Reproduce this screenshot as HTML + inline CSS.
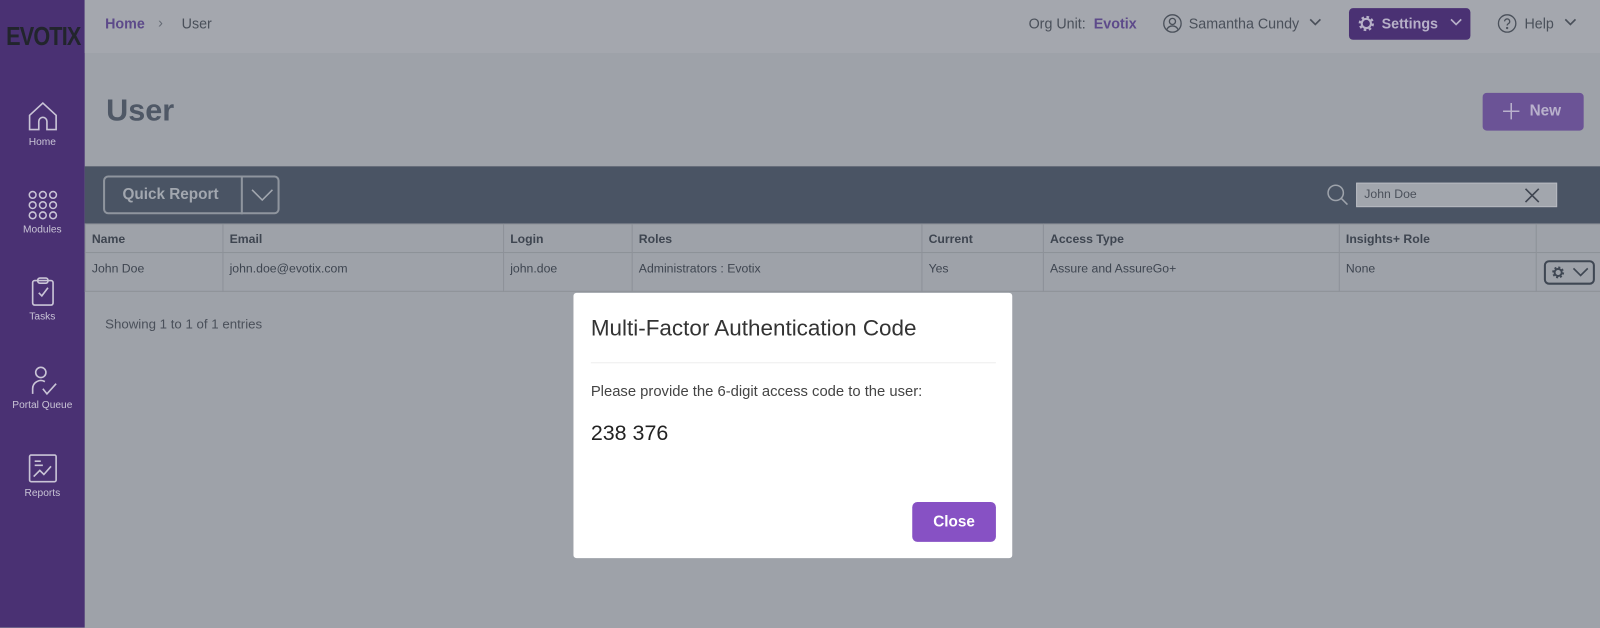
<!DOCTYPE html>
<html><head><meta charset="utf-8"><style>
*{margin:0;padding:0;box-sizing:border-box}
body{width:1600px;height:627px;overflow:hidden;background:#9ea2a9;font-family:"Liberation Sans",sans-serif;color:#3e4550}
#w{position:relative;width:1568px;height:615px;transform:scale(1.020408);transform-origin:0 0}
.side{position:absolute;left:0;top:0;width:83px;height:615px;background:#4a3173}
.logo{position:absolute;left:6px;top:22px;font-size:25px;font-weight:bold;color:#22252c;letter-spacing:-1px;transform:scaleX(.85);transform-origin:left}
.nav{position:absolute;left:0;width:83px;text-align:center;color:#c9c4d6;font-size:10px}
.nav svg{display:block;margin:0 auto 4px}
.top{position:absolute;left:83px;top:0;right:0;height:52px;background:#a4a7ae}
.abs{position:absolute;white-space:nowrap}
.tb{position:absolute;left:83px;top:163px;right:0;height:56px;background:#4a5464}
table{position:absolute;left:83px;top:219px;width:1485px;border-collapse:collapse;font-size:12px;table-layout:fixed}
td{border:1px solid #8d9198;padding:0 6px;vertical-align:top;color:#3e4550;overflow:hidden;white-space:nowrap}
tr.h td{height:28px;font-weight:bold;vertical-align:middle}
tr.b td{height:38px;padding-top:8px}
.modal{position:absolute;left:562px;top:287px;width:430px;height:260px;background:#fff;border-radius:3px}
</style></head><body><div id="w">
<div class="side">
<div class="logo">EVOTIX</div>
<div class="nav" style="top:98px"><svg width="32" height="32" viewBox="0 0 32 32" fill="none" stroke="#c9c4d6" stroke-width="1.6"><path d="M3 15L16 3l13 12v14H20v-8a4 4 0 0 0-8 0v8H3z"/></svg>Home</div>
<div class="nav" style="top:186px"><svg width="32" height="30" viewBox="0 0 32 30" fill="none" stroke="#c9c4d6" stroke-width="1.5"><circle cx="6" cy="5" r="3.3"/><circle cx="16" cy="5" r="3.3"/><circle cx="26" cy="5" r="3.3"/><circle cx="6" cy="15" r="3.3"/><circle cx="16" cy="15" r="3.3"/><circle cx="26" cy="15" r="3.3"/><circle cx="6" cy="25" r="3.3"/><circle cx="16" cy="25" r="3.3"/><circle cx="26" cy="25" r="3.3"/></svg>Modules</div>
<div class="nav" style="top:271px"><svg width="30" height="30" viewBox="0 0 30 30" fill="none" stroke="#c9c4d6" stroke-width="1.6"><rect x="5" y="4" width="20" height="24" rx="2"/><rect x="10" y="1.5" width="10" height="5" rx="2"/><path d="M11 16l3 3 6-8"/></svg>Tasks</div>
<div class="nav" style="top:358px"><svg width="32" height="30" viewBox="0 0 32 30" fill="none" stroke="#c9c4d6" stroke-width="1.6"><circle cx="14" cy="7" r="5"/><path d="M6 28v-5a8 8 0 0 1 12-7M16 23l4 5 9-10"/></svg>Portal Queue</div>
<div class="nav" style="top:444px"><svg width="30" height="30" viewBox="0 0 30 30" fill="none" stroke="#c9c4d6" stroke-width="1.6"><rect x="2" y="2" width="26" height="26" rx="1.5"/><path d="M7 8h6M7 12h8M6 23l6-6 4 4 7-8"/></svg>Reports</div>
</div>
<div class="top">
<div class="abs" style="left:20px;top:15px;font-size:14px;color:#5d4a8a;font-weight:bold">Home</div>
<div class="abs" style="left:72px;top:14px;font-size:14px;color:#646a74">›</div>
<div class="abs" style="left:95px;top:15px;font-size:14px;color:#4a505a">User</div>
<div class="abs" style="left:925px;top:15px;font-size:14px;color:#4a505a">Org Unit: <b style="color:#5d4a8a;margin-left:4px">Evotix</b></div>
<svg class="abs" style="left:1056px;top:13px" width="20" height="20" viewBox="0 0 20 20" fill="none" stroke="#4a505a" stroke-width="1.3"><circle cx="10" cy="10" r="8.5"/><circle cx="10" cy="8" r="3"/><path d="M4.5 16a6 6 0 0 1 11 0"/></svg>
<div class="abs" style="left:1082px;top:15px;font-size:14px;color:#4a505a">Samantha Cundy</div>
<svg class="abs" style="left:1200px;top:17px" width="12" height="10" viewBox="0 0 12 10" fill="none" stroke="#4a505a" stroke-width="1.6"><path d="M1 2l5 5 5-5"/></svg>
<div class="abs" style="left:1239px;top:8px;width:119px;height:31px;background:#4a3173;border-radius:4px"></div>
<svg class="abs" style="left:1247px;top:14px" width="18" height="18" viewBox="0 0 18 18"><circle cx="9" cy="9" r="6" fill="none" stroke="#b7b0c8" stroke-width="3" stroke-dasharray="2.4 2.3"/><circle cx="9" cy="9" r="4.5" fill="none" stroke="#b7b0c8" stroke-width="2"/></svg>
<div class="abs" style="left:1271px;top:15px;font-size:14px;font-weight:bold;color:#b7b0c8">Settings</div>
<svg class="abs" style="left:1338px;top:17px" width="12" height="10" viewBox="0 0 12 10" fill="none" stroke="#b7b0c8" stroke-width="1.6"><path d="M1 2l5 5 5-5"/></svg>
<svg class="abs" style="left:1384px;top:13px" width="20" height="20" viewBox="0 0 20 20" fill="none" stroke="#4a505a" stroke-width="1.3"><circle cx="10" cy="10" r="8.5"/><path d="M7.5 8a2.5 2.5 0 1 1 3.5 2.3c-.7.4-1 .9-1 1.7"/><circle cx="10" cy="14.5" r=".5"/></svg>
<div class="abs" style="left:1411px;top:15px;font-size:14px;color:#4a505a">Help</div>
<svg class="abs" style="left:1450px;top:17px" width="12" height="10" viewBox="0 0 12 10" fill="none" stroke="#4a505a" stroke-width="1.6"><path d="M1 2l5 5 5-5"/></svg>
</div>
<div class="abs" style="left:104px;top:92px;font-size:30px;font-weight:bold;color:#4f5866">User</div>
<div class="abs" style="left:1453px;top:91px;width:99px;height:37px;background:#6b5396;border-radius:4px"></div>
<svg class="abs" style="left:1472px;top:100px" width="18" height="18" viewBox="0 0 18 18" stroke="#b9b1cc" stroke-width="1.5"><path d="M9 1v16M1 9h16"/></svg>
<div class="abs" style="left:1499px;top:100px;font-size:15px;font-weight:bold;color:#b9b1cc">New</div>
<div class="tb">
<div class="abs" style="left:18px;top:9px;width:173px;height:38px;border:2px solid #8f959e;border-radius:5px"></div>
<div class="abs" style="left:153px;top:9px;width:2px;height:38px;background:#8f959e"></div>
<div class="abs" style="left:37px;top:19px;font-size:15px;font-weight:bold;color:#a2a7af">Quick Report</div>
<svg class="abs" style="left:162px;top:20px" width="24" height="16" viewBox="0 0 24 16" fill="none" stroke="#a2a7af" stroke-width="1.5"><path d="M2 3l10 10 10-10"/></svg>
<svg class="abs" style="left:1217px;top:17px" width="22" height="22" viewBox="0 0 22 22" fill="none" stroke="#9ea3ab" stroke-width="1.5"><circle cx="9" cy="9" r="7.5"/><path d="M14.5 14.5l6 6"/></svg>
<div class="abs" style="left:1246px;top:16px;width:197px;height:24px;background:#a2a6ad;border:1px solid #b7bac0"></div>
<div class="abs" style="left:1254px;top:20px;font-size:12px;color:#4a505a">John Doe</div>
<svg class="abs" style="left:1411px;top:21px" width="15" height="15" viewBox="0 0 15 15" stroke="#3f4550" stroke-width="1.6"><path d="M1 1l13 13M14 1L1 14"/></svg>
</div>
<table>
<colgroup><col style="width:135px"><col style="width:275px"><col style="width:126px"><col style="width:284px"><col style="width:119px"><col style="width:290px"><col style="width:193px"><col style="width:63px"></colgroup>
<tr class="h"><td>Name</td><td>Email</td><td>Login</td><td>Roles</td><td>Current</td><td>Access Type</td><td>Insights+ Role</td><td></td></tr>
<tr class="b"><td>John Doe</td><td>john.doe@evotix.com</td><td>john.doe</td><td>Administrators : Evotix</td><td>Yes</td><td>Assure and AssureGo+</td><td>None</td><td></td></tr>
</table>
<div class="abs" style="left:1513px;top:255px;width:50px;height:24px;border:2px solid #3f4753;border-radius:5px"></div>
<svg class="abs" style="left:1520px;top:260px" width="14" height="14" viewBox="0 0 18 18"><circle cx="9" cy="9" r="6" fill="none" stroke="#3f4753" stroke-width="3" stroke-dasharray="2.4 2.3"/><circle cx="9" cy="9" r="4.5" fill="none" stroke="#3f4753" stroke-width="2.5"/></svg>
<svg class="abs" style="left:1541px;top:261px" width="16" height="12" viewBox="0 0 16 12" fill="none" stroke="#3f4753" stroke-width="1.6"><path d="M1 2l7 7 7-7"/></svg>
<div class="abs" style="left:103px;top:310px;font-size:13px;color:#4a505a">Showing 1 to 1 of 1 entries</div>
<div class="modal">
<div class="abs" style="left:17px;top:22px;font-size:22px;color:#333">Multi-Factor Authentication Code</div>
<div class="abs" style="left:17px;top:68px;width:397px;height:1px;background:#eee"></div>
<div class="abs" style="left:17px;top:89px;font-size:14.5px;color:#444">Please provide the 6-digit access code to the user:</div>
<div class="abs" style="left:17px;top:126px;font-size:21px;color:#222">238 376</div>
<div class="abs" style="left:332px;top:205px;width:82px;height:39px;background:#8751c4;border-radius:5px;color:#fff;font-weight:bold;font-size:15px;text-align:center;line-height:39px">Close</div>
</div>
</div></body></html>
